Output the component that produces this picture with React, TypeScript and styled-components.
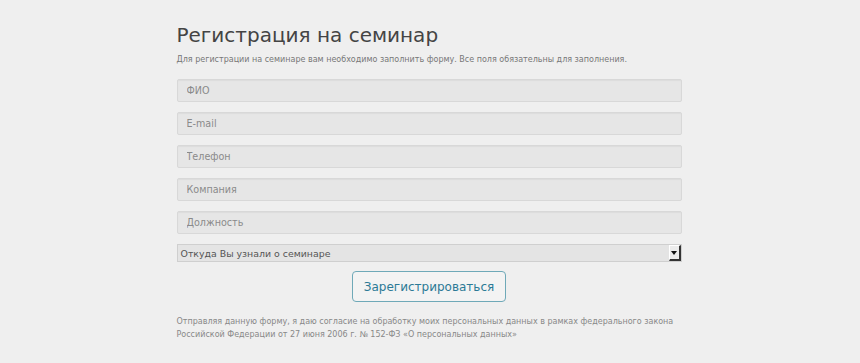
import React from 'react';
import styled, { createGlobalStyle } from 'styled-components';

const GlobalStyle = createGlobalStyle`
  html, body {
    margin: 0;
    padding: 0;
    background: #efefef;
    font-family: 'DejaVu Sans', Verdana, sans-serif;
  }
`;

const Page = styled.div`
  display: flex;
  justify-content: center;
  padding-top: 22px;
  padding-right: 2px;
`;

const Form = styled.form`
  width: 505px;
  display: flex;
  flex-direction: column;
`;

const Title = styled.h1`
  margin: 0;
  font-size: 20px;
  font-weight: normal;
  color: #444;
  line-height: 26px;
`;

const Note = styled.p`
  margin: 6px 0 0;
  font-size: 8px;
  line-height: 12px;
  color: #777;
`;

const Fields = styled.div`
  display: flex;
  flex-direction: column;
  gap: 10px;
  margin-top: 13px;
`;

const Input = styled.input`
  box-sizing: border-box;
  width: 100%;
  height: 23px;
  padding: 0 9px;
  border: 1px solid #d8d8d8;
  border-radius: 2px;
  background: #e6e6e6;
  box-shadow: inset 0 1px 1px rgba(0, 0, 0, 0.04);
  font-family: 'DejaVu Sans', Verdana, sans-serif;
  font-size: 9.6px;
  color: #444;
  outline: none;

  &::placeholder {
    color: #8a8a8a;
  }
`;

const SelectBox = styled.div`
  box-sizing: border-box;
  display: flex;
  align-items: center;
  justify-content: space-between;
  height: 18px;
  margin-top: 10px;
  padding-left: 3px;
  border: 1px solid #cfcfcf;
  background: #e4e4e4;
  font-size: 9.4px;
  color: #555;
`;

const Arrow = styled.span`
  box-sizing: border-box;
  display: flex;
  align-items: center;
  justify-content: center;
  width: 12px;
  height: 16px;
  background: #ececec;
  border-left: 1px solid #fff;
  border-top: 1px solid #fff;
  border-right: 2px solid #333;
  border-bottom: 2px solid #333;

  &::after {
    content: '';
    border-left: 3px solid transparent;
    border-right: 3px solid transparent;
    border-top: 4px solid #111;
  }
`;

const Actions = styled.div`
  display: flex;
  justify-content: center;
  margin-top: 9px;
`;

const Submit = styled.button`
  box-sizing: border-box;
  width: 154px;
  height: 31px;
  border: 1px solid #6fa9b8;
  border-radius: 4px;
  background: #f3f3f3;
  color: #2c7a96;
  font-family: 'DejaVu Sans', Verdana, sans-serif;
  font-size: 12px;
  cursor: pointer;
`;

const Consent = styled.p`
  margin: 13px 0 0;
  font-size: 8px;
  line-height: 13px;
  color: #888;
`;

const fields = ['ФИО', 'E-mail', 'Телефон', 'Компания', 'Должность'];

export default function App() {
  return (
    <>
      <GlobalStyle />
      <Page>
        <Form onSubmit={(e) => e.preventDefault()}>
          <Title>Регистрация на семинар</Title>
          <Note>Для регистрации на семинаре вам необходимо заполнить форму. Все поля обязательны для заполнения.</Note>
          <Fields>
            {fields.map((f) => (
              <Input key={f} placeholder={f} />
            ))}
          </Fields>
          <SelectBox>
            Откуда Вы узнали о семинаре
            <Arrow />
          </SelectBox>
          <Actions>
            <Submit type="submit">Зарегистрироваться</Submit>
          </Actions>
          <Consent>
            Отправляя данную форму, я даю согласие на обработку моих персональных данных в рамках федерального закона
            Российской Федерации от 27 июня 2006 г. № 152-ФЗ «О персональных данных»
          </Consent>
        </Form>
      </Page>
    </>
  );
}
